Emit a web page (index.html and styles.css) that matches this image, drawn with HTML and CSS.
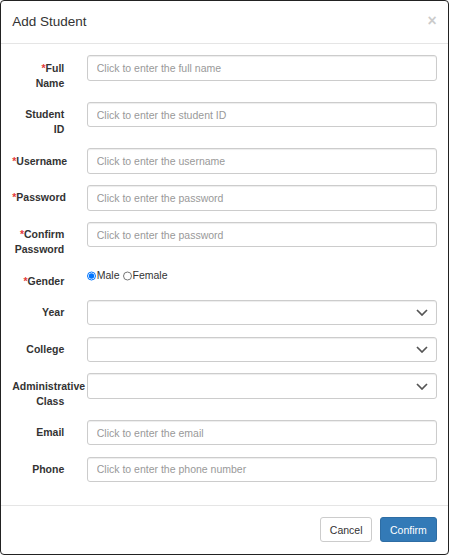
FILE: index.html
```html
<!DOCTYPE html>
<html lang="en">
<head>
    <meta charset="UTF-8">
    <meta name="viewport" content="width=device-width, initial-scale=1.0">
    <title>Add Student</title>
    <link rel="stylesheet" href="styles.css">
</head>
<body>
    <div class="modal">
        <div class="modal-header">
            <h4 class="modal-title">Add Student</h4>
            <button type="button" class="close">&times;</button>
        </div>

        <form class="modal-body">
            <div class="form-group">
                <label class="control-label"><span class="required">*</span>Full Name</label>
                <div class="control"><input type="text" class="form-control" placeholder="Click to enter the full name"></div>
            </div>
            <div class="form-group">
                <label class="control-label">Student ID</label>
                <div class="control"><input type="text" class="form-control" placeholder="Click to enter the student ID"></div>
            </div>
            <div class="form-group">
                <label class="control-label"><span class="required">*</span>Username</label>
                <div class="control"><input type="text" class="form-control" placeholder="Click to enter the username"></div>
            </div>
            <div class="form-group">
                <label class="control-label"><span class="required">*</span>Password</label>
                <div class="control"><input type="password" class="form-control" placeholder="Click to enter the password"></div>
            </div>
            <div class="form-group">
                <label class="control-label"><span class="required">*</span>Confirm Password</label>
                <div class="control"><input type="password" class="form-control" placeholder="Click to enter the password"></div>
            </div>
            <div class="form-group">
                <label class="control-label"><span class="required">*</span>Gender</label>
                <div class="control radios">
                    <label class="radio"><input type="radio" name="gender" checked>Male</label>
                    <label class="radio"><input type="radio" name="gender">Female</label>
                </div>
            </div>
            <div class="form-group">
                <label class="control-label">Year</label>
                <div class="control select-wrap">
                    <select class="form-control"><option></option></select>
                    <svg class="chevron" viewBox="0 0 12 7"><path d="M1 1l5 5 5-5"/></svg>
                </div>
            </div>
            <div class="form-group">
                <label class="control-label">College</label>
                <div class="control select-wrap">
                    <select class="form-control"><option></option></select>
                    <svg class="chevron" viewBox="0 0 12 7"><path d="M1 1l5 5 5-5"/></svg>
                </div>
            </div>
            <div class="form-group">
                <label class="control-label">Administrative Class</label>
                <div class="control select-wrap">
                    <select class="form-control"><option></option></select>
                    <svg class="chevron" viewBox="0 0 12 7"><path d="M1 1l5 5 5-5"/></svg>
                </div>
            </div>
            <div class="form-group">
                <label class="control-label">Email</label>
                <div class="control"><input type="text" class="form-control" placeholder="Click to enter the email"></div>
            </div>
            <div class="form-group">
                <label class="control-label">Phone</label>
                <div class="control"><input type="text" class="form-control" placeholder="Click to enter the phone number"></div>
            </div>
        </form>

        <div class="modal-footer">
            <button type="button" class="btn btn-default">Cancel</button>
            <button type="button" class="btn btn-primary">Confirm</button>
        </div>
    </div>
</body>
</html>
```

FILE: styles.css
```css
body {
    font-family: "Liberation Sans", Arial, sans-serif;
    font-size: 10.5px;
    line-height: 15px;
    color: #333;
    background-color: #fff;
    margin: 0;
    padding: 0;
}
.modal {
    width: 449px;
    box-sizing: border-box;
    border: 1px solid #222;
    border-radius: 4px;
    background-color: #fff;
}
.modal-header {
    display: flex;
    justify-content: space-between;
    align-items: flex-start;
    padding: 11px 11.25px;
    border-bottom: 1px solid #e5e5e5;
}
.modal-title {
    margin: 0;
    font-size: 13.5px;
    line-height: 20px;
    font-weight: normal;
    color: #333;
}
.close {
    margin-top: 1px;
    padding: 0;
    border: none;
    background: none;
    font-family: inherit;
    font-size: 15.75px;
    font-weight: bold;
    line-height: 1;
    color: #000;
    opacity: 0.2;
}
.modal-body {
    margin: 0;
    padding: 11.25px;
}
.form-group {
    display: grid;
    grid-template-columns: 16.6667% 1fr;
    margin: 0 -11.25px 11.25px;
}
.form-group > * {
    padding: 0 11.25px;
    min-width: 0;
}
.control-label {
    padding-top: 5.25px;
    text-align: right;
    font-weight: bold;
}
.required {
    color: #e4393c;
}
.control {
    position: relative;
}
.form-control {
    display: block;
    width: 100%;
    height: 25.5px;
    box-sizing: border-box;
    margin: 0;
    padding: 0 9px;
    font-family: inherit;
    font-size: 10.5px;
    color: #555;
    background-color: #fff;
    border: 1px solid #ccc;
    border-radius: 3px;
    box-shadow: inset 0 1px 1px rgba(0, 0, 0, 0.075);
}
.form-control::placeholder {
    color: #999;
}
select.form-control {
    appearance: none;
}
.chevron {
    position: absolute;
    right: 20px;
    top: 9.5px;
    width: 12px;
    height: 7px;
    fill: none;
    stroke: #555;
    stroke-width: 1.7;
}
.radios {
    display: flex;
    align-items: center;
    gap: 3px;
    height: 15px;
}
.radio {
    display: flex;
    align-items: center;
}
.radio input {
    width: 9.5px;
    height: 9.5px;
    margin: 0 0.5px 0 0;
}
.modal-footer {
    display: flex;
    justify-content: flex-end;
    gap: 7.5px;
    padding: 11.25px;
    border-top: 1px solid #e5e5e5;
}
.btn {
    height: 25.5px;
    padding: 0 9px;
    font-family: inherit;
    font-size: 10.5px;
    border: 1px solid transparent;
    border-radius: 3px;
    cursor: pointer;
}
.btn-default {
    color: #333;
    background-color: #fff;
    border-color: #ccc;
}
.btn-primary {
    color: #fff;
    background-color: #337ab7;
    border-color: #2e6da4;
}
```
